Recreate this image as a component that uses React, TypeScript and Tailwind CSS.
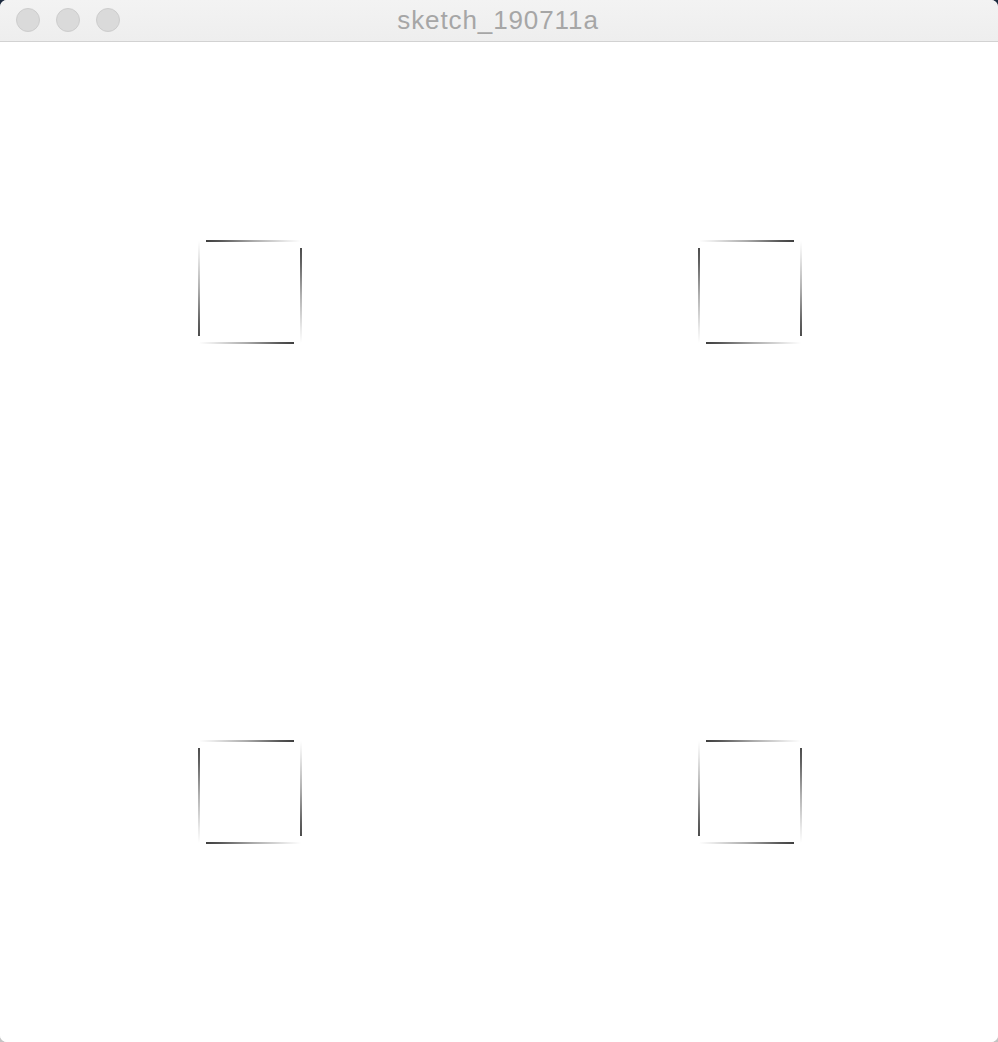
type Edge = { x1: number; y1: number; x2: number; y2: number };

// edges run from the dark end to the light end
function edgesFor(x: number, y: number, s: number, clockwise: boolean): Edge[] {
  const o = 7;
  const r = x + s;
  const b = y + s;
  if (clockwise) {
    return [
      { x1: x + o, y1: y, x2: r, y2: y },
      { x1: r, y1: y + o, x2: r, y2: b },
      { x1: r - o, y1: b, x2: x, y2: b },
      { x1: x, y1: b - o, x2: x, y2: y },
    ];
  }
  return [
    { x1: r - o, y1: y, x2: x, y2: y },
    { x1: x, y1: y + o, x2: x, y2: b },
    { x1: x + o, y1: b, x2: r, y2: b },
    { x1: r, y1: b - o, x2: r, y2: y },
  ];
}

const squares = [
  { x: 199, y: 199, cw: true },
  { x: 699, y: 199, cw: false },
  { x: 199, y: 699, cw: false },
  { x: 699, y: 699, cw: true },
];

function Sketch() {
  return (
    <svg width="998" height="1000" viewBox="0 0 998 1000" className="block">
      <defs>
        {squares.map((sq, i) =>
          edgesFor(sq.x, sq.y, 102, sq.cw).map((e, j) => (
            <linearGradient
              key={`g${i}${j}`}
              id={`g${i}${j}`}
              gradientUnits="userSpaceOnUse"
              x1={e.x1}
              y1={e.y1}
              x2={e.x2}
              y2={e.y2}
            >
              <stop offset="0" stopColor="#000000" />
              <stop offset="0.15" stopColor="#1e1e1e" />
              <stop offset="0.5" stopColor="#8f8f8f" />
              <stop offset="0.85" stopColor="#e2e2e2" />
              <stop offset="1" stopColor="#ffffff" />
            </linearGradient>
          ))
        )}
      </defs>
      {squares.map((sq, i) =>
        edgesFor(sq.x, sq.y, 102, sq.cw).map((e, j) => (
          <line
            key={`l${i}${j}`}
            x1={e.x1}
            y1={e.y1}
            x2={e.x2}
            y2={e.y2}
            stroke={`url(#g${i}${j})`}
            strokeWidth="1.4"
          />
        ))
      )}
    </svg>
  );
}

export default function App() {
  return (
    <div className="w-[998px] h-[1042px] bg-gradient-to-b from-[#1d2b40] via-[#9a9a9a] to-[#c4c4c4]">
      <div className="flex flex-col w-full h-full rounded-[7px] overflow-hidden bg-white">
        <div className="grid grid-cols-[1fr_auto_1fr] items-center h-[42px] shrink-0 bg-gradient-to-b from-[#f3f3f3] to-[#eeeeee] border-b border-[#d2d2d2]">
          <div className="flex items-center gap-4 pl-4 pb-[1px]">
            <span className="w-6 h-6 rounded-full bg-[#dadada] border border-[#cdcdcd]" />
            <span className="w-6 h-6 rounded-full bg-[#dadada] border border-[#cdcdcd]" />
            <span className="w-6 h-6 rounded-full bg-[#dadada] border border-[#cdcdcd]" />
          </div>
          <div className="text-[26px] leading-none text-[#a6a6a6] tracking-[0.9px] pb-[1px] pr-[2px] font-['Liberation_Sans',Arial,sans-serif]">
            sketch_190711a
          </div>
          <div />
        </div>
        <div className="flex-1 bg-white">
          <Sketch />
        </div>
      </div>
    </div>
  );
}
